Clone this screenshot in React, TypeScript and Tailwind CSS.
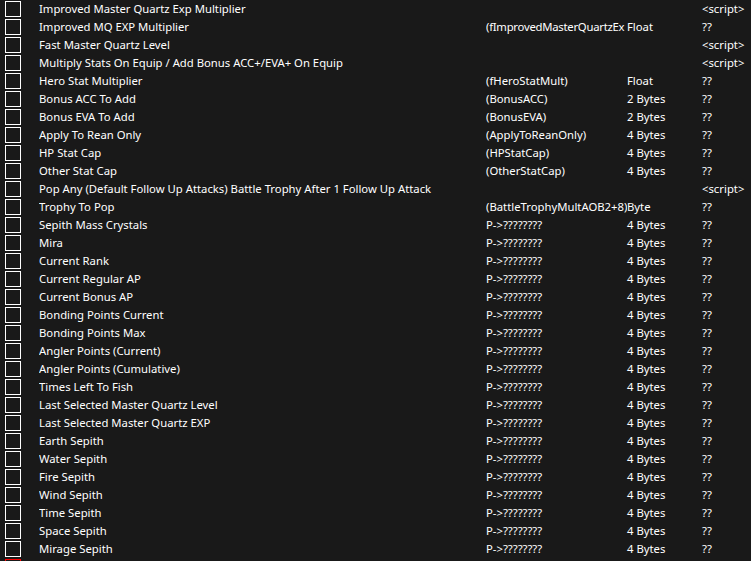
type Row = { d: string; a?: string; t?: string; v: string; tight?: boolean };

const P = "P->????????";
const rows: Row[] = [
  { d: "Improved Master Quartz Exp Multiplier", v: "<script>" },
  { d: "Improved MQ EXP Multiplier", a: "(fImprovedMasterQuartzEx", t: "Float", v: "??", tight: true },
  { d: "Fast Master Quartz Level", v: "<script>" },
  { d: "Multiply Stats On Equip / Add Bonus ACC+/EVA+ On Equip", v: "<script>" },
  { d: "Hero Stat Multiplier", a: "(fHeroStatMult)", t: "Float", v: "??" },
  { d: "Bonus ACC To Add", a: "(BonusACC)", t: "2 Bytes", v: "??" },
  { d: "Bonus EVA To Add", a: "(BonusEVA)", t: "2 Bytes", v: "??" },
  { d: "Apply To Rean Only", a: "(ApplyToReanOnly)", t: "4 Bytes", v: "??" },
  { d: "HP Stat Cap", a: "(HPStatCap)", t: "4 Bytes", v: "??" },
  { d: "Other Stat Cap", a: "(OtherStatCap)", t: "4 Bytes", v: "??" },
  { d: "Pop Any (Default Follow Up Attacks) Battle Trophy After 1 Follow Up Attack", v: "<script>" },
  { d: "Trophy To Pop", a: "(BattleTrophyMultAOB2+8)", t: "Byte", v: "??" },
  { d: "Sepith Mass Crystals", a: P, t: "4 Bytes", v: "??" },
  { d: "Mira", a: P, t: "4 Bytes", v: "??" },
  { d: "Current Rank", a: P, t: "4 Bytes", v: "??" },
  { d: "Current Regular AP", a: P, t: "4 Bytes", v: "??" },
  { d: "Current Bonus AP", a: P, t: "4 Bytes", v: "??" },
  { d: "Bonding Points Current", a: P, t: "4 Bytes", v: "??" },
  { d: "Bonding Points Max", a: P, t: "4 Bytes", v: "??" },
  { d: "Angler Points (Current)", a: P, t: "4 Bytes", v: "??" },
  { d: "Angler Points (Cumulative)", a: P, t: "4 Bytes", v: "??" },
  { d: "Times Left To Fish", a: P, t: "4 Bytes", v: "??" },
  { d: "Last Selected Master Quartz Level", a: P, t: "4 Bytes", v: "??" },
  { d: "Last Selected Master Quartz EXP", a: P, t: "4 Bytes", v: "??" },
  { d: "Earth Sepith", a: P, t: "4 Bytes", v: "??" },
  { d: "Water Sepith", a: P, t: "4 Bytes", v: "??" },
  { d: "Fire Sepith", a: P, t: "4 Bytes", v: "??" },
  { d: "Wind Sepith", a: P, t: "4 Bytes", v: "??" },
  { d: "Time Sepith", a: P, t: "4 Bytes", v: "??" },
  { d: "Space Sepith", a: P, t: "4 Bytes", v: "??" },
  { d: "Mirage Sepith", a: P, t: "4 Bytes", v: "??" },
];

export default function App() {
  return (
    <div
      className="bg-[#191919] text-white w-[751px] h-[561px] overflow-hidden text-[11.3px] leading-[18px]"
      style={{ fontFamily: '"Noto Sans", "Open Sans", sans-serif' }}
    >
      {rows.map((r, i) => (
        <div key={i} className="flex h-[18px] items-start">
          <div className="w-[39px] shrink-0 pl-[5px] pt-px">
            <div className="w-[16px] h-[16px] border border-white" />
          </div>
          {r.a ? (
            <>
              <div className="w-[447px] shrink-0 whitespace-nowrap overflow-hidden">{r.d}</div>
              <div
                className={`w-[141px] shrink-0 whitespace-nowrap overflow-hidden ${r.tight ? "tracking-[-0.25px]" : ""}`}
              >
                {r.a}
              </div>
              <div className="w-[75px] shrink-0 whitespace-nowrap">{r.t}</div>
            </>
          ) : (
            <div className="w-[663px] shrink-0 whitespace-nowrap overflow-hidden">{r.d}</div>
          )}
          <div className="whitespace-nowrap">{r.v}</div>
        </div>
      ))}
      <div className="flex h-[18px] items-start">
        <div className="w-[39px] shrink-0 pl-[5px] pt-px">
          <div className="w-[16px] h-[16px] border border-[#ff0000]" />
        </div>
      </div>
    </div>
  );
}
